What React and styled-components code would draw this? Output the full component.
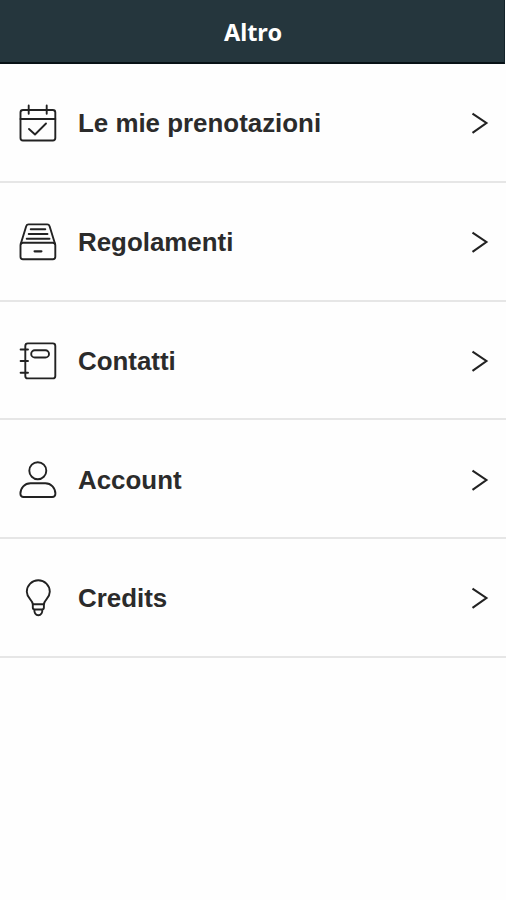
import styled, { createGlobalStyle } from "styled-components";

const menu = [
  { label: "Le mie prenotazioni", icon: CalendarIcon },
  { label: "Regolamenti", icon: DrawerIcon },
  { label: "Contatti", icon: NotebookIcon },
  { label: "Account", icon: UserIcon },
  { label: "Credits", icon: BulbIcon },
];

function CalendarIcon() {
  return (
    <Icon viewBox="0 0 40 40">
      <rect x="2.5" y="7" width="34.8" height="30.5" rx="2.5" />
      <path d="M2.5 16H37.3M10.7 2.4v8.4M28.7 2.4v8.4M11 26l6 5.5L28 20.5" />
    </Icon>
  );
}

function DrawerIcon() {
  return (
    <Icon viewBox="0 0 40 40">
      <rect x="2.5" y="20.7" width="34.8" height="16.5" rx="2.5" />
      <path d="M2.8 21.7L8.2 4.2Q8.8 2.4 10.6 2.4H29.2Q31 2.4 31.6 4.2L37 21.7" />
      <path d="M12.7 7.3H27.3M10.7 12H29.5M8.7 16.7H31.5" />
      <path d="M16.6 29.3H23.4" strokeWidth="2.2" />
    </Icon>
  );
}

function NotebookIcon() {
  return (
    <Icon viewBox="0 0 40 40">
      <rect x="7.3" y="2.4" width="30" height="35" rx="2.5" />
      <rect x="13.2" y="9.3" width="17.8" height="7.2" rx="3.6" />
      <path d="M2.6 8.5H10M2.6 20H10M2.6 31.8H10" />
    </Icon>
  );
}

function UserIcon() {
  return (
    <Icon viewBox="0 0 40 40">
      <circle cx="19.8" cy="10.7" r="8.5" />
      <path d="M12.5 23.2H27.3C33.2 23.2 37.4 28 37.4 33.8Q37.4 37 34.2 37H5.6Q2.4 37 2.4 33.8C2.4 28 6.6 23.2 12.5 23.2Z" />
    </Icon>
  );
}

function BulbIcon() {
  return (
    <Icon viewBox="0 0 40 40">
      <path d="M14.8 26.3C14.8 21.7 8.8 20.5 8.8 13.8A11.5 11.5 0 0 1 31.8 13.8C31.8 20.5 25.9 21.7 25.9 26.3Z" />
      <path d="M14.8 26.3V29.5Q14.8 31.5 16.8 31.5H23.9Q25.9 31.5 25.9 29.5V26.3M16.3 31.5C16.3 35.2 17.5 37.2 20.3 37.2S24.4 35.2 24.4 31.5" />
    </Icon>
  );
}

export default function App() {
  return (
    <>
      <GlobalStyle />
      <Header>
        <Title>Altro</Title>
      </Header>
      <List>
        {menu.map(({ label, icon: ItemIcon }) => (
          <Row key={label}>
            <ItemIcon />
            <Label>{label}</Label>
            <Chevron viewBox="0 0 18 24">
              <path d="M1.5 2.6L15.4 12L1.5 21.8" />
            </Chevron>
          </Row>
        ))}
      </List>
    </>
  );
}

const GlobalStyle = createGlobalStyle`
  * {
    box-sizing: border-box;
  }
  body {
    margin: 0;
    background: #fefefe;
    font-family: "Liberation Sans", Arial, sans-serif;
  }
`;

const Header = styled.header`
  display: flex;
  justify-content: center;
  align-items: center;
  height: 64px;
  margin-right: 1px;
  background: #25363d;
  border-bottom: 2px solid #071116;
  border-right: 1px solid #14242b;
`;

const Title = styled.h1`
  margin: 1px 0 0 2px;
  color: #fff;
  font-family: "Noto Sans", sans-serif;
  font-size: 23.5px;
  font-weight: 700;
  line-height: 30px;
`;

const List = styled.ul`
  margin: 0;
  padding: 0;
  list-style: none;
`;

const Row = styled.li`
  display: flex;
  align-items: center;
  height: 118.75px;
  padding: 2px 17px 0 18px;
  border-bottom: 2px solid #e6e6e6;
`;

const Label = styled.span`
  flex: 1;
  margin-left: 20px;
  color: #2b2b2b;
  font-size: 25.9px;
  font-weight: 700;
  line-height: 32px;
`;

const Icon = styled.svg`
  flex: none;
  width: 40px;
  height: 40px;
  fill: none;
  stroke: #222;
  stroke-width: 1.9;
  stroke-linecap: round;
  stroke-linejoin: round;
`;

const Chevron = styled.svg`
  flex: none;
  width: 18px;
  height: 24px;
  fill: none;
  stroke: #222;
  stroke-width: 2.1;
`;
